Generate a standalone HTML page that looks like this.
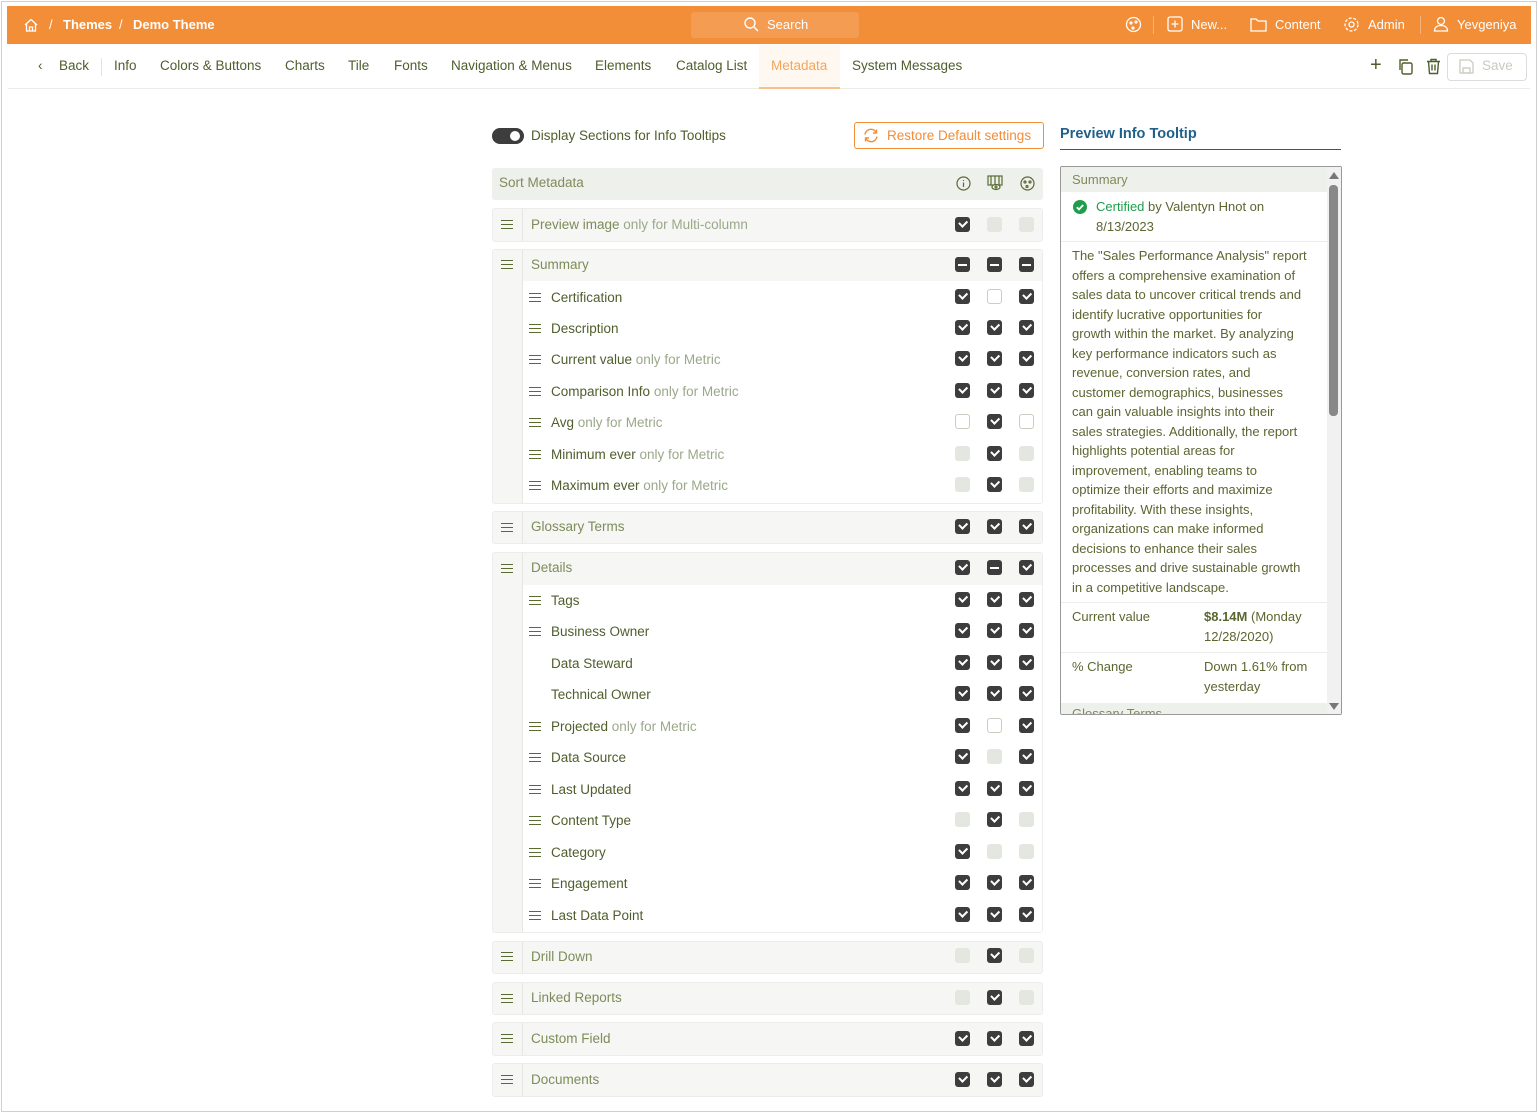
<!DOCTYPE html>
<html><head><meta charset="utf-8">
<style>
*{box-sizing:border-box;margin:0;padding:0}
body{width:1538px;height:1113px;background:#fff;font-family:"Liberation Sans",sans-serif;position:relative;overflow:hidden;color:#4f5e2c}
.frame{position:absolute;left:1px;top:1px;width:1536px;height:1111px;border:1px solid #cfcfcf}
.top{position:absolute;left:7px;top:6px;width:1524px;height:38px;background:#f28d38;color:#fff;font-size:13px;font-weight:bold}
.top span{position:absolute;top:11px}
.search{position:absolute;left:684px;top:6px;width:168px;height:26px;background:#f39c52;border-radius:3px}
.nav{position:absolute;top:58px;font-size:13.5px;color:#4f5e2c}
.a{position:absolute}
.grp{position:absolute;left:492px;width:551px;background:#f6f6f4;border:1px solid #ececea;border-radius:3px}
.sub{position:absolute;left:522px;width:520px;background:#fff}
.cb{position:absolute;width:15px;height:15px;border-radius:3px}
.c{background:#3d3d3d}
.c::after{content:"";position:absolute;left:4px;top:3px;width:6px;height:3.5px;border-left:2px solid #fff;border-bottom:2px solid #fff;transform:rotate(-45deg)}
.m{background:#3d3d3d}
.m::after{content:"";position:absolute;left:3px;top:6.5px;width:9px;height:2px;background:#fff}
.e{background:#fff;border:1px solid #c8cfc0}
.d{background:#e3e7df}
.lbl{position:absolute;font-size:13.5px;white-space:nowrap}
.gl{color:#7d8c5a}
.dim{color:#9aa88a}
.hb{position:absolute;width:12px;height:9px;border-top:1.5px solid #5a6a35;border-bottom:1.5px solid #5a6a35}
.hb::after{content:"";position:absolute;left:0;top:2.5px;width:12px;height:1.5px;background:#5a6a35}
.tt{position:absolute;left:1060px;top:166px;width:282px;height:549px;border:1px solid #999;border-radius:2px;overflow:hidden;font-size:13px;line-height:19.5px;color:#5a6630}
</style></head><body>
<div class="frame"></div>
<div class="top">
<svg class="a" style="left:16px;top:11px" width="16" height="16" viewBox="0 0 16 16" fill="none" stroke="#fff" stroke-width="1.3"><path d="M2 8L8 2.5 14 8M3.5 7v7h9V7M6.5 14v-4h3v4"/></svg>
<span style="left:42px;font-weight:normal">/</span><span style="left:56px">Themes</span><span style="left:112px;font-weight:normal">/</span><span style="left:126px">Demo Theme</span>
<div class="search"></div>
<svg class="a" style="left:736px;top:10px" width="16" height="16" viewBox="0 0 16 16" fill="none" stroke="#fff" stroke-width="1.4"><circle cx="7" cy="7" r="5"/><path d="M11 11l4 4"/></svg>
<span style="left:760px;font-weight:normal">Search</span>
<svg class="a" style="left:1118px;top:10px" width="17" height="17" viewBox="0 0 17 17" fill="none" stroke="#fff" stroke-width="1.3"><circle cx="8.5" cy="8.5" r="7"/><circle cx="6" cy="7" r="1"/><circle cx="11" cy="6" r="1"/><circle cx="8" cy="12" r="1"/></svg>
<div class="a" style="left:1146px;top:10px;width:1px;height:18px;background:#f6b27a"></div>
<svg class="a" style="left:1160px;top:10px" width="16" height="16" viewBox="0 0 16 16" fill="none" stroke="#fff" stroke-width="1.3"><rect x="1" y="1" width="14" height="14" rx="2"/><path d="M8 4.5v7M4.5 8h7"/></svg>
<span style="left:1184px;font-weight:normal">New...</span>
<svg class="a" style="left:1243px;top:10px" width="17" height="16" viewBox="0 0 17 16" fill="none" stroke="#fff" stroke-width="1.3"><path d="M1 3h5l2 2h8v10H1z"/></svg>
<span style="left:1268px;font-weight:normal">Content</span>
<svg class="a" style="left:1336px;top:10px" width="17" height="17" viewBox="0 0 17 17" fill="none" stroke="#fff" stroke-width="1.3"><circle cx="8.5" cy="8.5" r="2.5"/><circle cx="8.5" cy="8.5" r="6.5" stroke-dasharray="3 1.6"/></svg>
<span style="left:1361px;font-weight:normal">Admin</span>
<div class="a" style="left:1413px;top:10px;width:1px;height:18px;background:#f6b27a"></div>
<svg class="a" style="left:1426px;top:10px" width="16" height="16" viewBox="0 0 16 16" fill="none" stroke="#fff" stroke-width="1.3"><circle cx="8" cy="5" r="3.5"/><path d="M1.5 15c0-4 3-5.5 6.5-5.5s6.5 1.5 6.5 5.5z"/></svg>
<span style="left:1450px;font-weight:normal">Yevgeniya</span>
</div>
<div class="a" style="left:8px;top:88px;width:1522px;height:1px;background:#ebebeb"></div>
<div class="nav" style="left:38px">‹</div>
<div class="nav" style="left:59px">Back</div>
<div class="a" style="left:101px;top:58px;width:1px;height:18px;background:#e3e3e3"></div>
<div class="nav" style="left:114px">Info</div>
<div class="nav" style="left:160px">Colors &amp; Buttons</div>
<div class="nav" style="left:285px">Charts</div>
<div class="nav" style="left:348px">Tile</div>
<div class="nav" style="left:394px">Fonts</div>
<div class="nav" style="left:451px">Navigation &amp; Menus</div>
<div class="nav" style="left:595px">Elements</div>
<div class="nav" style="left:676px">Catalog List</div>
<div class="a" style="left:759px;top:45px;width:81px;height:44px;background:#fff8f1;border-bottom:2px solid #f7c08a"></div>
<div class="nav" style="left:771px;color:#f4a55a">Metadata</div>
<div class="nav" style="left:852px">System Messages</div>
<div class="nav" style="left:1370px;font-size:20px;top:54px">+</div>
<svg class="a" style="left:1397px;top:58px" width="17" height="17" viewBox="0 0 17 17" fill="none" stroke="#4f5e2c" stroke-width="1.4"><rect x="5" y="5" width="10" height="11" rx="1.5"/><path d="M3 12V2h8"/></svg>
<svg class="a" style="left:1426px;top:58px" width="15" height="17" viewBox="0 0 15 17" fill="none" stroke="#4f5e2c" stroke-width="1.4"><path d="M1 3.5h13M5 3.5V1.5h5v2M2.5 3.5l1 12h8l1-12M6 6.5v6M9 6.5v6"/></svg>
<div class="a" style="left:1447px;top:53px;width:80px;height:28px;border:1px solid #dcdcdc;border-radius:4px"></div>
<svg class="a" style="left:1459px;top:59px" width="15" height="15" viewBox="0 0 15 15" fill="none" stroke="#c8cbc0" stroke-width="1.3"><path d="M1 1h10l3 3v10H1z"/><rect x="4" y="9" width="7" height="5"/></svg>
<div class="nav" style="left:1482px;color:#c8cbc0;font-size:13.5px">Save</div>
<div class="a" style="left:492px;top:128px;width:32px;height:16px;border-radius:8px;background:#3d3d3d"></div>
<div class="a" style="left:510px;top:131px;width:10px;height:10px;border-radius:5px;background:#fff"></div>
<div class="lbl" style="left:531px;top:128px">Display Sections for Info Tooltips</div>
<div class="a" style="left:854px;top:122px;width:190px;height:27px;border:1px solid #f28d38;border-radius:3px"></div>
<svg class="a" style="left:863px;top:128px" width="16" height="15" viewBox="0 0 16 15" fill="none" stroke="#f28d38" stroke-width="1.4"><path d="M2 6.5A6 6 0 0 1 13.5 5M14 8.5A6 6 0 0 1 2.5 10M13.5 1.5V5H10M2.5 13.5V10H6"/></svg>
<div class="lbl" style="left:887px;top:128px;color:#f28d38">Restore Default settings</div>
<div class="a" style="left:492px;top:168px;width:551px;height:32px;background:#eef0ec;border-radius:3px"></div>
<div class="lbl gl" style="left:499px;top:175px">Sort Metadata</div>
<svg class="a" style="left:956px;top:176px" width="15" height="15" viewBox="0 0 15 15" fill="none" stroke="#5a6a35" stroke-width="1.2"><circle cx="7.5" cy="7.5" r="6.5"/><path d="M7.5 6.5v4.5M7.5 4v1"/></svg>
<svg class="a" style="left:987px;top:175px" width="16" height="16" viewBox="0 0 16 16" fill="none" stroke="#5a6a35" stroke-width="1.2"><rect x="1" y="1" width="14" height="9"/><path d="M4 1v9M8 1v9M12 1v9"/><ellipse cx="9" cy="12" rx="4" ry="2.5" fill="#fff"/><circle cx="9" cy="12" r="1"/></svg>
<svg class="a" style="left:1020px;top:176px" width="15" height="15" viewBox="0 0 15 15" fill="none" stroke="#5a6a35" stroke-width="1.2"><circle cx="7.5" cy="7.5" r="6.5"/><circle cx="5" cy="6" r="1"/><circle cx="10" cy="6" r="1"/><circle cx="7" cy="10.5" r="1"/></svg>

<div class="grp" style="top:208px;height:34px"></div>
<div class="grp" style="top:249px;height:255px"></div>
<div class="sub" style="top:281px;height:222px"></div>
<div class="grp" style="top:511px;height:33px"></div>
<div class="grp" style="top:552px;height:381px"></div>
<div class="sub" style="top:585px;height:347px"></div>
<div class="grp" style="top:941px;height:33px"></div>
<div class="grp" style="top:982px;height:33px"></div>
<div class="grp" style="top:1022px;height:34px"></div>
<div class="grp" style="top:1063px;height:34px"></div>

<div class="a" style="left:522px;top:209px;width:1px;height:32px;background:#e6e6e2"></div>
<div class="a" style="left:522px;top:250px;width:1px;height:253px;background:#e6e6e2"></div>
<div class="a" style="left:522px;top:512px;width:1px;height:31px;background:#e6e6e2"></div>
<div class="a" style="left:522px;top:553px;width:1px;height:379px;background:#e6e6e2"></div>
<div class="a" style="left:522px;top:942px;width:1px;height:31px;background:#e6e6e2"></div>
<div class="a" style="left:522px;top:983px;width:1px;height:31px;background:#e6e6e2"></div>
<div class="a" style="left:522px;top:1023px;width:1px;height:32px;background:#e6e6e2"></div>
<div class="a" style="left:522px;top:1064px;width:1px;height:32px;background:#e6e6e2"></div>

<div class="hb" style="left:501px;top:220px"></div><div class="lbl gl" style="left:531px;top:217px">Preview image <span class="dim">only for Multi-column</span></div>
<div class="cb c" style="left:955px;top:217px"></div><div class="cb d" style="left:987px;top:217px"></div><div class="cb d" style="left:1019px;top:217px"></div>

<div class="hb" style="left:501px;top:260px"></div><div class="lbl gl" style="left:531px;top:257px">Summary</div>
<div class="cb m" style="left:955px;top:257px"></div><div class="cb m" style="left:987px;top:257px"></div><div class="cb m" style="left:1019px;top:257px"></div>

<div class="hb" style="left:529px;top:293px"></div><div class="lbl" style="left:551px;top:290px">Certification</div>
<div class="cb c" style="left:955px;top:289px"></div><div class="cb e" style="left:987px;top:289px"></div><div class="cb c" style="left:1019px;top:289px"></div>
<div class="hb" style="left:529px;top:324px"></div><div class="lbl" style="left:551px;top:321px">Description</div>
<div class="cb c" style="left:955px;top:320px"></div><div class="cb c" style="left:987px;top:320px"></div><div class="cb c" style="left:1019px;top:320px"></div>
<div class="hb" style="left:529px;top:355px"></div><div class="lbl" style="left:551px;top:352px">Current value <span class="dim">only for Metric</span></div>
<div class="cb c" style="left:955px;top:351px"></div><div class="cb c" style="left:987px;top:351px"></div><div class="cb c" style="left:1019px;top:351px"></div>
<div class="hb" style="left:529px;top:387px"></div><div class="lbl" style="left:551px;top:384px">Comparison Info <span class="dim">only for Metric</span></div>
<div class="cb c" style="left:955px;top:383px"></div><div class="cb c" style="left:987px;top:383px"></div><div class="cb c" style="left:1019px;top:383px"></div>
<div class="hb" style="left:529px;top:418px"></div><div class="lbl" style="left:551px;top:415px">Avg <span class="dim">only for Metric</span></div>
<div class="cb e" style="left:955px;top:414px"></div><div class="cb c" style="left:987px;top:414px"></div><div class="cb e" style="left:1019px;top:414px"></div>
<div class="hb" style="left:529px;top:450px"></div><div class="lbl" style="left:551px;top:447px">Minimum ever <span class="dim">only for Metric</span></div>
<div class="cb d" style="left:955px;top:446px"></div><div class="cb c" style="left:987px;top:446px"></div><div class="cb d" style="left:1019px;top:446px"></div>
<div class="hb" style="left:529px;top:481px"></div><div class="lbl" style="left:551px;top:478px">Maximum ever <span class="dim">only for Metric</span></div>
<div class="cb d" style="left:955px;top:477px"></div><div class="cb c" style="left:987px;top:477px"></div><div class="cb d" style="left:1019px;top:477px"></div>

<div class="hb" style="left:501px;top:523px"></div><div class="lbl gl" style="left:531px;top:519px">Glossary Terms</div>
<div class="cb c" style="left:955px;top:519px"></div><div class="cb c" style="left:987px;top:519px"></div><div class="cb c" style="left:1019px;top:519px"></div>

<div class="hb" style="left:501px;top:564px"></div><div class="lbl gl" style="left:531px;top:560px">Details</div>
<div class="cb c" style="left:955px;top:560px"></div><div class="cb m" style="left:987px;top:560px"></div><div class="cb c" style="left:1019px;top:560px"></div>

<div class="hb" style="left:529px;top:596px"></div><div class="lbl" style="left:551px;top:593px">Tags</div>
<div class="cb c" style="left:955px;top:592px"></div><div class="cb c" style="left:987px;top:592px"></div><div class="cb c" style="left:1019px;top:592px"></div>
<div class="hb" style="left:529px;top:627px"></div><div class="lbl" style="left:551px;top:624px">Business Owner</div>
<div class="cb c" style="left:955px;top:623px"></div><div class="cb c" style="left:987px;top:623px"></div><div class="cb c" style="left:1019px;top:623px"></div>
<div class="lbl" style="left:551px;top:656px">Data Steward</div>
<div class="cb c" style="left:955px;top:655px"></div><div class="cb c" style="left:987px;top:655px"></div><div class="cb c" style="left:1019px;top:655px"></div>
<div class="lbl" style="left:551px;top:687px">Technical Owner</div>
<div class="cb c" style="left:955px;top:686px"></div><div class="cb c" style="left:987px;top:686px"></div><div class="cb c" style="left:1019px;top:686px"></div>
<div class="hb" style="left:529px;top:722px"></div><div class="lbl" style="left:551px;top:719px">Projected <span class="dim">only for Metric</span></div>
<div class="cb c" style="left:955px;top:718px"></div><div class="cb e" style="left:987px;top:718px"></div><div class="cb c" style="left:1019px;top:718px"></div>
<div class="hb" style="left:529px;top:753px"></div><div class="lbl" style="left:551px;top:750px">Data Source</div>
<div class="cb c" style="left:955px;top:749px"></div><div class="cb d" style="left:987px;top:749px"></div><div class="cb c" style="left:1019px;top:749px"></div>
<div class="hb" style="left:529px;top:785px"></div><div class="lbl" style="left:551px;top:782px">Last Updated</div>
<div class="cb c" style="left:955px;top:781px"></div><div class="cb c" style="left:987px;top:781px"></div><div class="cb c" style="left:1019px;top:781px"></div>
<div class="hb" style="left:529px;top:816px"></div><div class="lbl" style="left:551px;top:813px">Content Type</div>
<div class="cb d" style="left:955px;top:812px"></div><div class="cb c" style="left:987px;top:812px"></div><div class="cb d" style="left:1019px;top:812px"></div>
<div class="hb" style="left:529px;top:848px"></div><div class="lbl" style="left:551px;top:845px">Category</div>
<div class="cb c" style="left:955px;top:844px"></div><div class="cb d" style="left:987px;top:844px"></div><div class="cb d" style="left:1019px;top:844px"></div>
<div class="hb" style="left:529px;top:879px"></div><div class="lbl" style="left:551px;top:876px">Engagement</div>
<div class="cb c" style="left:955px;top:875px"></div><div class="cb c" style="left:987px;top:875px"></div><div class="cb c" style="left:1019px;top:875px"></div>
<div class="hb" style="left:529px;top:911px"></div><div class="lbl" style="left:551px;top:908px">Last Data Point</div>
<div class="cb c" style="left:955px;top:907px"></div><div class="cb c" style="left:987px;top:907px"></div><div class="cb c" style="left:1019px;top:907px"></div>

<div class="hb" style="left:501px;top:952px"></div><div class="lbl gl" style="left:531px;top:949px">Drill Down</div>
<div class="cb d" style="left:955px;top:948px"></div><div class="cb c" style="left:987px;top:948px"></div><div class="cb d" style="left:1019px;top:948px"></div>
<div class="hb" style="left:501px;top:994px"></div><div class="lbl gl" style="left:531px;top:990px">Linked Reports</div>
<div class="cb d" style="left:955px;top:990px"></div><div class="cb c" style="left:987px;top:990px"></div><div class="cb d" style="left:1019px;top:990px"></div>
<div class="hb" style="left:501px;top:1034px"></div><div class="lbl gl" style="left:531px;top:1031px">Custom Field</div>
<div class="cb c" style="left:955px;top:1031px"></div><div class="cb c" style="left:987px;top:1031px"></div><div class="cb c" style="left:1019px;top:1031px"></div>
<div class="hb" style="left:501px;top:1075px"></div><div class="lbl gl" style="left:531px;top:1072px">Documents</div>
<div class="cb c" style="left:955px;top:1072px"></div><div class="cb c" style="left:987px;top:1072px"></div><div class="cb c" style="left:1019px;top:1072px"></div>

<div class="a" style="left:1060px;top:126px;font-size:14.5px;font-weight:bold;color:#1f5f8b">Preview Info Tooltip</div>
<div class="a" style="left:1060px;top:149px;width:281px;height:1px;background:#1f5f8b"></div>
<div class="tt">
<div class="a" style="left:0;top:0;width:266px;height:25px;background:#eef0ec"></div>
<div class="a" style="left:11px;top:3px;color:#7d8c5a">Summary</div>
<svg class="a" style="left:12px;top:33px" width="14" height="14" viewBox="0 0 14 14"><circle cx="7" cy="7" r="7" fill="#1e9e4a"/><path d="M3.8 7.2l2.2 2.2 4.2-4.4" fill="none" stroke="#fff" stroke-width="1.8"/></svg>
<div class="a" style="left:35px;top:30px;width:220px"><span style="color:#1e9e4a">Certified</span> by Valentyn Hnot on 8/13/2023</div>
<div class="a" style="left:0;top:74px;width:266px;height:1px;background:#ececea"></div>
<div class="a" style="left:11px;top:79px;white-space:nowrap">The "Sales Performance Analysis" report<br>offers a comprehensive examination of<br>sales data to uncover critical trends and<br>identify lucrative opportunities for<br>growth within the market. By analyzing<br>key performance indicators such as<br>revenue, conversion rates, and<br>customer demographics, businesses<br>can gain valuable insights into their<br>sales strategies. Additionally, the report<br>highlights potential areas for<br>improvement, enabling teams to<br>optimize their efforts and maximize<br>profitability. With these insights,<br>organizations can make informed<br>decisions to enhance their sales<br>processes and drive sustainable growth<br>in a competitive landscape.</div>
<div class="a" style="left:0;top:435px;width:266px;height:1px;background:#ececea"></div>
<div class="a" style="left:11px;top:440px">Current value</div>
<div class="a" style="left:143px;top:440px;width:115px"><b>$8.14M</b> (Monday 12/28/2020)</div>
<div class="a" style="left:0;top:485px;width:266px;height:1px;background:#ececea"></div>
<div class="a" style="left:11px;top:490px">% Change</div>
<div class="a" style="left:143px;top:490px;width:115px">Down 1.61% from yesterday</div>
<div class="a" style="left:0;top:536px;width:266px;height:14px;background:#eef0ec"></div>
<div class="a" style="left:11px;top:537px;color:#7d8c5a">Glossary Terms</div>
<div class="a" style="left:266px;top:0;width:15px;height:549px;background:#f1f1f1"></div>
<div class="a" style="left:268px;top:5px;width:0;height:0;border-left:5px solid transparent;border-right:5px solid transparent;border-bottom:7px solid #777"></div>
<div class="a" style="left:268px;top:536px;width:0;height:0;border-left:5px solid transparent;border-right:5px solid transparent;border-top:7px solid #777"></div>
<div class="a" style="left:268px;top:18px;width:9px;height:231px;border-radius:4px;background:#888"></div>
</div>
</body></html>
